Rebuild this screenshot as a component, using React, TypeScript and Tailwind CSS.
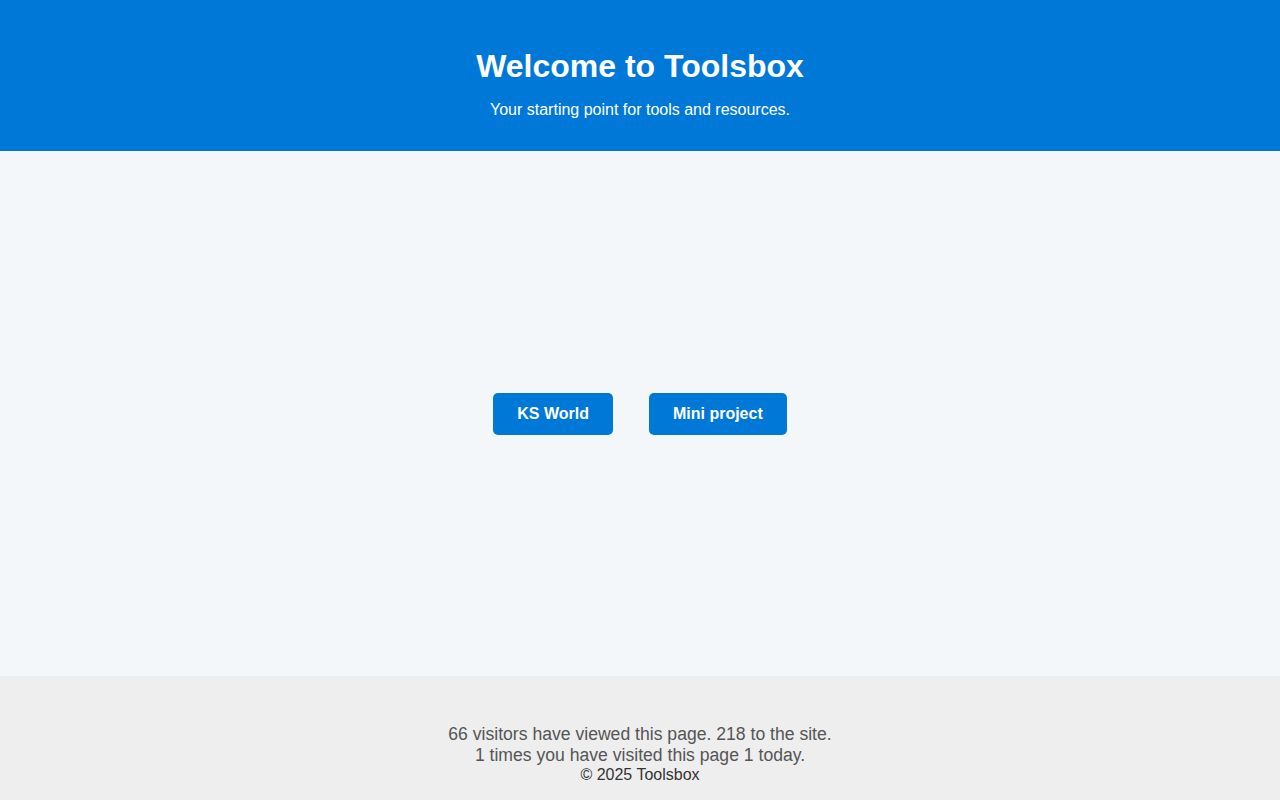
export default function App() {
  return (
    <div className="flex h-[800px] flex-col bg-[#f4f7fa] font-['Liberation_Sans',Arial,sans-serif]">
      <header className="h-[151px] shrink-0 bg-[#0078d7] pt-[48px] text-center text-white">
        <h1 className="text-[32px] font-bold leading-[37px]">Welcome to Toolsbox</h1>
        <p className="mt-[16px] text-[16px] leading-[18px]">Your starting point for tools and resources.</p>
      </header>
      <main className="flex flex-1 items-center justify-center gap-[36px]">
        <a className="rounded-[5px] bg-[#0078d7] px-6 py-3 text-[16px] font-bold leading-[18px] text-white">KS World</a>
        <a className="rounded-[5px] bg-[#0078d7] px-6 py-3 text-[16px] font-bold leading-[18px] text-white">Mini project</a>
      </main>
      <footer className="h-[124px] shrink-0 bg-[#eeeeee] pt-[48px] text-center">
        <p className="text-[17.6px] leading-[21px] text-[#555555]">66 visitors have viewed this page. 218 to the site.</p>
        <p className="text-[17.6px] leading-[21px] text-[#555555]">1 times you have visited this page 1 today.</p>
        <p className="text-[16px] leading-[18px] text-[#333333]">© 2025 Toolsbox</p>
      </footer>
    </div>
  );
}
